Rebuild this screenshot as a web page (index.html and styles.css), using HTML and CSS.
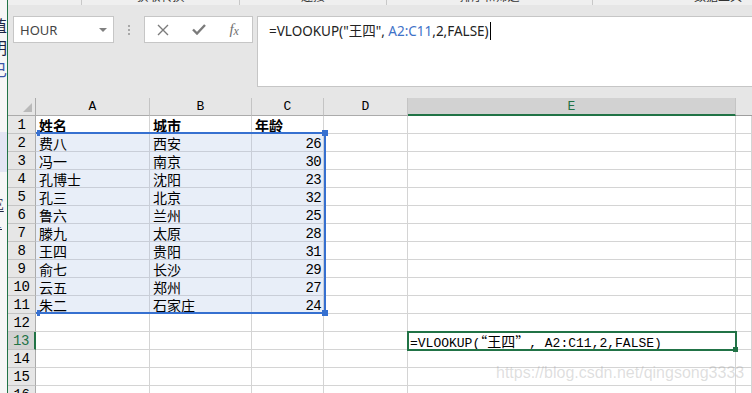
FILE: index.html
```html
<!DOCTYPE html>
<html lang="zh-CN">
<head>
    <meta charset="UTF-8">
    <meta name="viewport" content="width=device-width, initial-scale=1.0">
    <title>VLOOKUP</title>
    <link rel="stylesheet" href="styles.css">
</head>
<body>
    <div class="window">
        <div class="side">
            <span class="g1">值</span>
            <span class="g2">明</span>
            <span class="g3">已</span>
            <span class="blk"></span>
            <span class="g4">E</span>
            <span class="g5">1</span>
        </div>
        <div class="app">
            <div class="ribbon">
                <div class="group w1"></div>
                <div class="group w2"><span>获取转换</span></div>
                <div class="group w3"><span>连接</span></div>
                <div class="group w4"><span>排序和筛选</span></div>
                <div class="group w5"><span>数据工具</span></div>
            </div>

            <div class="formula-row">
                <div class="name-box">
                    <span>HOUR</span>
                    <span class="drop"></span>
                </div>
                <div class="grip"><i></i><i></i><i></i></div>
                <div class="fx-box">
                    <span class="slot">
                        <svg width="12" height="12" viewBox="0 0 12 12"><path d="M1 1 L11 11 M11 1 L1 11" stroke="#7b7b7b" stroke-width="1.4" fill="none"/></svg>
                    </span>
                    <span class="slot">
                        <svg width="14" height="11" viewBox="0 0 14 11"><path d="M1 5.5 L5 9.5 L13 1" stroke="#7b7b7b" stroke-width="2.4" fill="none"/></svg>
                    </span>
                    <span class="slot fx"><i>f</i><i class="x">x</i></span>
                </div>
                <div class="formula-bar">=VLOOKUP("王四", <span class="ref">A2:C11</span>,2,FALSE)<span class="cursor"></span></div>
            </div>

            <div class="sheet">
                <div class="corner"><span></span></div>
                <div class="ch">A</div><div class="ch">B</div><div class="ch">C</div><div class="ch">D</div><div class="ch on">E</div><div class="ch blank"></div>

                <div class="rh">1</div><div class="c b">姓名</div><div class="c b">城市</div><div class="c b">年龄</div><div class="c"></div><div class="c"></div><div class="c"></div>
                <div class="rh">2</div><div class="c sel">费八</div><div class="c sel">西安</div><div class="c sel num">26</div><div class="c"></div><div class="c"></div><div class="c"></div>
                <div class="rh">3</div><div class="c sel">冯一</div><div class="c sel">南京</div><div class="c sel num">30</div><div class="c"></div><div class="c"></div><div class="c"></div>
                <div class="rh">4</div><div class="c sel">孔博士</div><div class="c sel">沈阳</div><div class="c sel num">23</div><div class="c"></div><div class="c"></div><div class="c"></div>
                <div class="rh">5</div><div class="c sel">孔三</div><div class="c sel">北京</div><div class="c sel num">32</div><div class="c"></div><div class="c"></div><div class="c"></div>
                <div class="rh">6</div><div class="c sel">鲁六</div><div class="c sel">兰州</div><div class="c sel num">25</div><div class="c"></div><div class="c"></div><div class="c"></div>
                <div class="rh">7</div><div class="c sel">滕九</div><div class="c sel">太原</div><div class="c sel num">28</div><div class="c"></div><div class="c"></div><div class="c"></div>
                <div class="rh">8</div><div class="c sel">王四</div><div class="c sel">贵阳</div><div class="c sel num">31</div><div class="c"></div><div class="c"></div><div class="c"></div>
                <div class="rh">9</div><div class="c sel">俞七</div><div class="c sel">长沙</div><div class="c sel num">29</div><div class="c"></div><div class="c"></div><div class="c"></div>
                <div class="rh">10</div><div class="c sel">云五</div><div class="c sel">郑州</div><div class="c sel num">27</div><div class="c"></div><div class="c"></div><div class="c"></div>
                <div class="rh">11</div><div class="c sel">朱二</div><div class="c sel">石家庄</div><div class="c sel num">24</div><div class="c"></div><div class="c"></div><div class="c"></div>
                <div class="rh">12</div><div class="c"></div><div class="c"></div><div class="c"></div><div class="c"></div><div class="c"></div><div class="c"></div>
                <div class="rh on">13</div><div class="c"></div><div class="c"></div><div class="c"></div><div class="c"></div><div class="c mono">=VLOOKUP(<span class="cjk">“王四”</span>, A2:C11,2,FALSE)</div><div class="c"></div>
                <div class="rh">14</div><div class="c"></div><div class="c"></div><div class="c"></div><div class="c"></div><div class="c"></div><div class="c"></div>
                <div class="rh">15</div><div class="c"></div><div class="c"></div><div class="c"></div><div class="c"></div><div class="c"></div><div class="c"></div>
                <div class="rh">16</div><div class="c"></div><div class="c"></div><div class="c"></div><div class="c"></div><div class="c"></div><div class="c"></div>

                <div class="range-box">
                    <span class="h tl"></span><span class="h tr"></span><span class="h bl"></span><span class="h br"></span>
                </div>
                <div class="active-cell"><span class="fill"></span></div>
                <div class="watermark">https://blog.csdn.net/qingsong3333</div>
            </div>
        </div>
    </div>
</body>
</html>
```

FILE: styles.css
```css
/* hoja de calculo */
body {
    margin: 0;
    width: 752px;
    height: 393px;
    overflow: hidden;
    background: #e6e6e6;
    font-family: "Noto Sans", "Noto Sans CJK SC", sans-serif;
    color: #000;
}
.window {
    display: flex;
    height: 393px;
}

/* ventana de atras */
.side {
    width: 7px;
    flex: none;
    background: #f6f6f6;
    border-right: 1px solid #217346;
    overflow: hidden;
    display: flex;
    flex-direction: column;
    font-family: "Noto Sans CJK SC", sans-serif;
    font-size: 16px;
    line-height: 18px;
    color: #1c2545;
}
.side span {
    display: block;
    flex: none;
    height: 18px;
    overflow: hidden;
    margin-left: -9px;
}
.side .g1 { margin-top: 16px; }
.side .g2 { margin-top: 4px; }
.side .g3 { margin-top: 4px; color: #3a56a8; }
.side .blk {
    margin: 54px 0 0 0;
    height: 40px;
    background: #e3e5f3;
}
.side .g4 { margin-top: 24px; font-family: "Liberation Serif", serif; margin-left: -6px; text-decoration: underline; }
.side .g5 { font-family: "Liberation Serif", serif; margin-left: -6px; text-decoration: underline; }

.app {
    flex: 1;
    min-width: 0;
    display: flex;
    flex-direction: column;
}

/* cinta cortada */
.ribbon {
    flex: none;
    height: 5px;
    display: flex;
    overflow: hidden;
    background: #efefef;
    font-family: "Noto Sans CJK SC", sans-serif;
    font-size: 12px;
    color: #333;
}
.ribbon .group {
    flex: none;
    border-right: 1px solid #c8c8c8;
    text-align: center;
    line-height: 14px;
}
.ribbon .group span {
    display: block;
    margin-top: -11px;
}
.w1 { width: 73px; }
.w2 { width: 157px; }
.w3 { width: 146px; }
.w4 { width: 205px; }
.w5 { width: 250px; }

/* barra de formulas */
.formula-row {
    flex: none;
    display: flex;
    align-items: flex-start;
    padding: 11px 0 11px 5px;
}
.name-box {
    width: 101px;
    height: 27px;
    box-sizing: border-box;
    background: #fff;
    border: 1px solid #c6c6c6;
    display: flex;
    align-items: center;
    padding: 0 6px;
    font-size: 13px;
    color: #444;
}
.name-box .drop {
    margin-left: auto;
    border-left: 4px solid transparent;
    border-right: 4px solid transparent;
    border-top: 4px solid #808080;
}
.grip {
    width: 3px;
    height: 27px;
    margin: 0 13px 0 14px;
    display: flex;
    flex-direction: column;
    justify-content: center;
    gap: 2px;
}
.grip i {
    display: block;
    width: 2px;
    height: 2px;
    background: #a8a8a8;
}
.fx-box {
    width: 109px;
    height: 27px;
    box-sizing: border-box;
    background: #fff;
    border: 1px solid #c6c6c6;
    display: flex;
}
.fx-box .slot {
    width: 36px;
    display: flex;
    align-items: center;
    justify-content: center;
}
.fx-box .fx {
    font-family: "Liberation Serif", serif;
    font-size: 15px;
    color: #707070;
}
.fx-box .fx .x {
    font-size: 12px;
    margin-top: 4px;
}
.formula-bar {
    flex: 1;
    height: 71px;
    box-sizing: border-box;
    margin: 0 -2px 0 4px;
    background: #fff;
    border: 1px solid #c6c6c6;
    padding: 5px 0 0 11px;
    font-size: 13.5px;
    line-height: 18px;
    color: #222;
    white-space: nowrap;
}
.formula-bar .ref {
    color: #3f72c8;
}
.formula-bar .cursor {
    display: inline-block;
    width: 1px;
    height: 18px;
    background: #000;
    margin-left: 1px;
    vertical-align: -4px;
}

/* cuadricula */
.sheet {
    position: relative;
    flex: 1;
    min-height: 0;
    overflow: hidden;
    display: grid;
    grid-template-columns: 28px 114px 102px 72px 84px 328px 1fr;
    grid-auto-rows: 18px;
    align-content: start;
    font-family: "Liberation Mono", "Noto Sans CJK SC", monospace;
}
.sheet > div {
    box-sizing: border-box;
}
.corner {
    border-right: 1px solid #ababab;
    border-bottom: 1px solid #ababab;
    position: relative;
}
.corner span {
    position: absolute;
    right: 3px;
    bottom: 3px;
    border-left: 9px solid transparent;
    border-bottom: 9px solid #b9b9b9;
}
.ch {
    border-right: 1px solid #c4c4c4;
    border-bottom: 1px solid #ababab;
    text-align: center;
    font-size: 13px;
    line-height: 18px;
}
.ch.on {
    background: #d2d2d2;
    color: #217346;
    border-bottom: 2px solid #217346;
}
.ch.blank {
    border-right: none;
    border-bottom-color: #9e9e9e;
}
.rh {
    border-right: 1px solid #ababab;
    border-bottom: 1px solid #c4c4c4;
    text-align: center;
    font-size: 14px;
    letter-spacing: -0.5px;
    line-height: 19px;
}
.rh.on {
    background: #d2d2d2;
    color: #217346;
    border-right: 2px solid #217346;
}
.c {
    background: #fff;
    border-right: 1px solid #d4d4d4;
    border-bottom: 1px solid #d4d4d4;
    padding: 0 2px 0 3px;
    font-family: "Noto Sans CJK SC", sans-serif;
    font-size: 14px;
    line-height: 18px;
    white-space: nowrap;
    overflow: hidden;
}
.c.b {
    font-weight: bold;
}
.c.sel {
    background: #e8eef8;
    border-color: #c9ced8;
}
.c.num {
    text-align: right;
    font-family: "Liberation Mono", monospace;
    font-size: 14px;
    letter-spacing: -0.6px;
    line-height: 20px;
}
.c.mono {
    font-family: "Liberation Mono", monospace;
    font-size: 13px;
    padding-left: 2px;
    line-height: 18px;
}
.c.mono .cjk {
    font-family: "Noto Sans CJK SC", sans-serif;
    font-size: 14px;
}

/* rango de la formula */
.range-box {
    position: absolute;
    left: 28px;
    top: 34px;
    width: 290px;
    height: 182px;
    box-sizing: border-box;
    border-top: 2px solid #3670d0;
    border-bottom: 2px solid #3670d0;
    border-right: 2px solid #3670d0;
}
.range-box .h {
    position: absolute;
    width: 6px;
    height: 6px;
    background: #3670d0;
}
.range-box .tl { left: 1px; top: -4px; width: 3px; }
.range-box .bl { left: 1px; bottom: -4px; width: 3px; }
.range-box .tr { right: -4px; top: -4px; }
.range-box .br { right: -4px; bottom: -4px; }

.active-cell {
    position: absolute;
    left: 399px;
    top: 233px;
    width: 330px;
    height: 20px;
    box-sizing: border-box;
    border: 2px solid #217346;
}
.active-cell .fill {
    position: absolute;
    right: -3px;
    bottom: -3px;
    width: 5px;
    height: 5px;
    background: #217346;
}
.watermark {
    position: absolute;
    left: 488px;
    top: 266px;
    font-family: "Liberation Sans", sans-serif;
    font-size: 16px;
    color: rgba(160, 160, 160, 0.35);
    white-space: nowrap;
}
```
